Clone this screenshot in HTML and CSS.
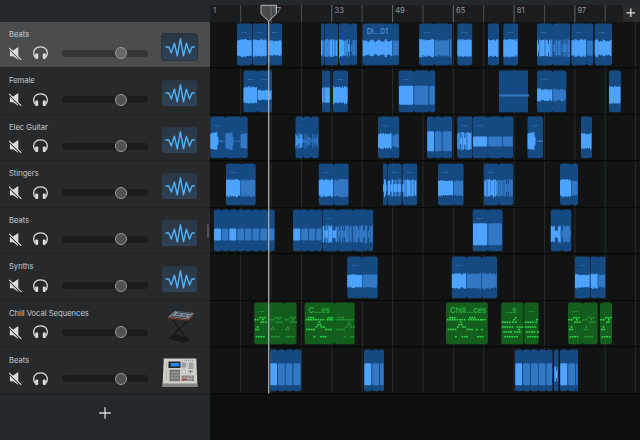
FILE: index.html
```html
<!DOCTYPE html>
<html lang="en">
<head>
<meta charset="utf-8">
<title>Tracks</title>
<link rel="stylesheet" href="styles.css">
</head>
<body>
<svg class="defs" width="0" height="0">
  <defs>
    <symbol id="mute" viewBox="0 0 13 13"><path fill="#dcdcdc" d="M.9 3.500h3.200L9.300 0v12.800L4.100 9.300H.900z"/><path d="M0 1.900 11.300 13.200" stroke="var(--row)" stroke-width="1.100"/><path d="M.200.900 12.300 12.800" stroke="#dcdcdc" stroke-width="1.100"/></symbol>
    <symbol id="phones" viewBox="0 0 15 14"><path d="M1.900 11.200C.5 8.500.4 5.200 2 3.200 4.500.2 10.500.2 13 3.200c1.600 2 1.500 5.300.1 8" fill="none" stroke="#dcdcdc" stroke-width="1.300"/><rect x="2.200" y="7.600" width="3" height="5.400" rx="1" fill="#dcdcdc"/><rect x="9.800" y="7.600" width="3" height="5.400" rx="1" fill="#dcdcdc"/></symbol>
    <symbol id="audio" viewBox="0 0 36 27"><path d="M3.500 13H6.800l2.500 6 3.100-9.800 2.900 12.600 3.100-17 3.100 17 2.900-12.600 3.100 9.800L30 13h2.800" fill="none" stroke="#52b2fa" stroke-width="1.400" stroke-linejoin="round"/></symbol>
    <symbol id="keys" viewBox="0 0 36 36">
      <path d="m5 30 9-4 15 6-8 3z" fill="#19191b"/>
      <path d="m11 12 14.500 20M27 12 10 28" stroke="#0b0c0c" stroke-width="1"/>
      <path d="m6 9 7-6 19 2-6 6.500z" fill="#78858c"/>
      <path d="m6 9 20 2.600 6-6.600v1.500L26.500 12.700 6 10.300z" fill="#7b3e25"/>
      <path d="m9 8 16 2M11 5.500l17 2.400M14 3.800l15 1.700" stroke="#2b353d" stroke-width=".8"/>
      <path d="m12 7 3-3M18 8l3-3M24 9l3-3" stroke="#b7c1c4" stroke-width=".8"/>
    </symbol>
    <symbol id="pads" viewBox="0 0 36 30">
      <path d="M1.800.5h32.500l1 25.500v3H.6v-3z" fill="#d1d0cb"/><path d="M.6 25.500h34.700V29H.6z" fill="#858585"/>
      <rect x="6.500" y="3.500" width="12" height="6.500" fill="#22272b"/><rect x="8.800" y="5" width="8.500" height="3.300" fill="#2387ef"/>
      <rect x="19.700" y="4.500" width="4.500" height="5" fill="#959ba5"/><rect x="26.500" y="4.500" width="5" height="6.500" fill="#a5a5a5"/>
      <rect x="7.500" y="11.700" width="10.500" height="11.500" fill="#6c6e70"/><path d="M7.500 14.500H18M7.500 17.300H18M7.500 20.200H18M10.200 11.700v11.500M12.800 11.700v11.500M15.400 11.700v11.500" stroke="#aaa" stroke-width=".6"/>
      <rect x="19.500" y="17.500" width="12.500" height="5.500" fill="#85817f"/><path d="M20 20.200h12M23 17.500V23M26 17.500V23M29 17.500V23" stroke="#ccc" stroke-width=".5"/><rect x="20.200" y="20.700" width="4" height="1.500" fill="#c43838"/>
      <circle cx="21.800" cy="13.500" r="1.700" fill="#eee" stroke="#777" stroke-width=".5"/><path d="M26 13.500h5M28.500 12v3.500" stroke="#777" stroke-width=".8"/>
      <path d="M4.400 4v6M4.400 12.500v9M20 2.400h11" stroke="#888" stroke-width=".9" stroke-dasharray="1 1"/>
    </symbol>
  </defs>
</svg>
<main class="app">
  <aside class="sidebar">
    <div class="sidebar-top"></div>
    <div class="tracks" id="tracks"></div>
    <div class="add-track"><svg width="12" height="12" viewBox="0 0 12 12"><path d="M6 .2v11.600M.2 6h11.600" stroke="#d8d9d9" stroke-width="1.300"/></svg></div>
    <span class="grip"></span>
  </aside>
  <section class="timeline">
    <div class="topband"></div>
    <div class="ruler"><svg id="ruler" width="430" height="17"></svg></div>
    <div class="lanes" id="lanes"></div>
    <svg class="playhead" width="18" height="394"><path d="M8.700 20.500V393.500" stroke="#adadad" stroke-width="1.300"/><path d="M1 5.300h15.500v8.500L8.700 21 1 13.800z" fill="#777" fill-opacity=".5" stroke="#b5b5b5" stroke-width="1"/></svg>
  </section>
</main>
<script src="app.js"></script>
</body>
</html>
```
FILE: styles.css
```css
* { box-sizing: border-box; }
body { margin: 0; background: #0e0f0f; font-family: Inter, "Liberation Sans", sans-serif; }
.defs { position: absolute; }
.app { display: grid; grid-template-columns: 210px 430px; width: 640px; height: 440px; overflow: hidden; }
.sidebar { position: relative; display: flex; flex-direction: column; background: #24282a; }
.sidebar-top { height: 21.5px; flex: none; }
.tracks { flex: none; }
.track { --row: #28292b; --groove: #1b1c1e; --knob: #515153; height: 46.520px; display: grid; grid-template-columns: 153px 36px; column-gap: 0; padding-left: 8.500px; background: var(--row); border-bottom: 1px solid #202223; }
.track.selected { --row: #4b4c4d; --groove: #353638; --knob: #67686a; }
.name { margin: 8.400px 0 0 .5px; height: 10px; color: #cacacb; font-size: 7.600px; line-height: 10px; white-space: nowrap; }
.controls { display: flex; align-items: center; height: 14px; margin-top: 6.400px; }
.controls svg { flex: none; }
.controls .mute { width: 13px; height: 13px; margin-right: 11.800px; }
.controls .phones { width: 15px; height: 14px; margin-right: 14.200px; }
.slider { display: flex; flex: none; align-items: center; width: 85.500px; height: 7px; padding-left: 52.500px; border-radius: 4px; background: var(--groove); }
.knob { flex: none; width: 12px; height: 12px; border: 1px solid #999a9b; border-radius: 50%; background: var(--knob); }
.thumb { width: 35px; height: 26px; margin-top: 12px; border-radius: 2px; background: linear-gradient(#2a3743, #2f4257); }
.selected .thumb { outline: 1px solid #28323d; }
.thumb svg { display: block; width: 36px; height: 27px; }
.thumb.keys, .thumb.pads { background: none; }
.thumb.keys { margin-top: 7px; }
.thumb.keys svg { width: 36px; height: 36px; }
.thumb.pads { margin-top: 11px; }
.thumb.pads svg { width: 36px; height: 30px; }
.add-track { flex: 1; display: flex; justify-content: center; padding-top: 12.700px; border-top: 1px solid #1c1e1f; }
.grip { position: absolute; left: 206.500px; top: 224px; width: 2.500px; height: 14px; border-radius: 1px; background: #505253; }
.timeline { position: relative; display: flex; flex-direction: column; background: #0d0e0e; }
.topband { height: 5px; background: #23282a; flex: none; }
.ruler { height: 17px; background: #1b1c1e; flex: none; }
.ruler svg, .lane svg { display: block; }
.lane { height: 46.530px; background: #121413; }
.playhead { position: absolute; left: 50px; top: 0; }
svg text { font-family: Inter, "Liberation Sans", sans-serif; }
```
FILE: app.js
```js
const names = ['Beats', 'Female', 'Elec Guitar', 'Stingers', 'Beats', 'Synths', 'Chill Vocal Sequences', 'Beats'];
document.getElementById('tracks').innerHTML = names.map((n, i) => {
  const icon = i === 6 ? 'keys' : i === 7 ? 'pads' : 'audio';
  return `<div class="track${i ? '' : ' selected'}"><div><div class="name">${n}</div><div class="controls">
  <svg class="mute"><use href="#mute"/></svg><svg class="phones"><use href="#phones"/></svg>
  <div class="slider"><span class="knob"></span></div></div></div>
  <div class="thumb ${icon}"><svg><use href="#${icon}"/></svg></div></div>`;
}).join('');

const X0 = 210, BEAT = 30.38;
let r = '';
for (let i = 0; i < 15; i++) {
  const x = .3 + i * BEAT;
  if (i) r += `<path d="M${x} 0V17" stroke="${i % 2 ? '#4c4e4f' : '#666868'}" stroke-width="1"/>`;
  if (i % 2 === 0 && i < 14) r += `<text x="${x + 2.700}" y="7.600" font-size="7.500" fill="#96989a">${1 + i * 8}</text>`;
}
r += '<rect x="413" width="17" height="17" fill="#292b2d"/><path d="M420.800 3.500v8.600M416.500 7.800h8.600" stroke="#e0e0e0" stroke-width="1.300"/>';
document.getElementById('ruler').innerHTML = r;

// Segment: [start, end, bright, wave kind, half height, label]
const E = '…';
const lanes = [
  [[237,252.2,1,'n',9,E],[252.7,267.2,1,'n',9,E],[267.8,282,1,'n',8,E],
   [321,324,1,'s',9],[324.5,338,1,'s',9],[339,350.8,1,'s',9],[350.8,357,0,'s',9],
   [362.7,392.5,1,'w',9,'Di…01'],[392.5,399,0,'n',8],
   [419.2,434.5,1,'n',9,E],[434.5,450,0,'n',9],[450,452,0,'n',9],[457.3,472.2,1,'n',9,E],[488,499,1,'n',9],[503.3,518,1,'n',9,E],
   [537,552.5,1,'s',9,E],[552.5,570.3,0,'s',9],[571.5,586.7,1,'n',9,E],[586.7,593.3,0,'n',8],[594.7,612,1,'w',9,E]],
  [[243.5,257.6,1,'n',9,E],[257.6,272,1,'w',6,E],[322,324.4,1,'n',8],[324.4,330.3,1,'n',8],[333,348,1,'n',9,E],
   [398.7,414,1,'b',9.500,E],[414,429,0,'b',9.500],[429,435.2,0,'b',9.500],[499,528,0,'l',1],
   [537,552.5,1,'w',7,E],[552.5,566.3,0,'w',7],[609,621,1,'n',9]],
  [[210.3,225.5,1,'u',10,E],[225.5,240.500,0,'u',10],[240.500,247.7,0,'u',9],[295.5,303.5,1,'q',8,E],[303.5,311.3,0,'q',8],[311.3,318.7,0,'q',8],
   [378,392.3,1,'n',8,E],[392.3,399.2,0,'n',7],[427,434.700,1,'b',10],[434.700,442.300,0,'b',10],[442.300,452.200,0,'b',10],
   [457.3,472.3,1,'s',9,E],[472.7,488,1,'b',5,E],[488,502.500,0,'b',5],[502.500,513.2,0,'b',5],[527.5,543,1,'u',10,E],[581,592,1,'n',8]],
  [[226,240.500,1,'n',9,E],[240.500,255.700,0,'n',9],[318.800,333.700,1,'n',9,E],[333.700,348.700,0,'n',9],[383,387.2,1,'s',9],[387.6,401.700,1,'s',9,E],[402.400,417.2,1,'s',9,E],
   [438,453.600,1,'n',8,E],[453.600,463.6,0,'n',8],[484,499,1,'s',9,E],[499,513.2,0,'s',9],[560,571.5,1,'n',9],[571.500,578,0,'n',8]],
  [[213.8,221.500,1,'b',6],[221.500,229,0,'b',6],[229,237,1,'b',6],[237,244.500,0,'b',6],[244.500,252.300,0,'b',6],[252.300,260,0,'b',6],[260,267.500,0,'b',6],[267.500,274.800,0,'b',6],
   [293,301,1,'b',6],[301,308.500,0,'b',6],[308.500,316,0,'b',6],[316,322,0,'b',6],[322.600,338,1,'s',9,E],[338,353,0,'s',9],[353,368,0,'s',9],[368,373.2,0,'s',9],
   [472.700,488,1,'b',11,E],[488,502.500,0,'b',11],[550.800,562,1,'s',9],[562,571.300,0,'s',9]],
  [[347.2,362.500,1,'n',7,E],[362.500,377.700,0,'n',7],[451.800,466.700,1,'n',8,E],[466.700,482,0,'n',8],[482,497.2,0,'n',8],
   [575,590.200,1,'n',7,E],[590.600,598.300,1,'n',8],[598.300,605.500,0,'n',7]],
  [[254.2,269.5,1,'A',0,E],[269.5,284.300,0,'A',0],[284.300,296.500,0,'A',0],[304.600,334.500,1,'B',0,'C…es'],[334.500,354.600,0,'B',0],
   [446,487.800,1,'B',0,'Chill…ces'],[501.200,523.500,1,'C',0,'…s'],[524.200,538.600,1,'C',0,E],[568,582.600,1,'A',0,E],[582.600,597.700,0,'A',0],[600,612,1,'A',0]],
  [[270,277.700,1,'b',11],[277.700,285.400,0,'b',11],[285.400,293,0,'b',11],[293,301,0,'b',11],[364,372,1,'b',11],[372,379.600,0,'b',11],[379.600,384,0,'b',11],
   [515,522.800,1,'b',11],[522.800,530.600,0,'b',11],[530.600,538.500,0,'b',11],[538.500,546.200,0,'b',11],[546.200,552.600,0,'b',11],[554,558.500,1,'s',9],[560,568,1,'b',11],[568,575.600,0,'b',11],[575.600,578,0,'b',11]]
];

// Notes: [start, y, end] runs of short dashes
const notes = {
  A: [[.3,19,4],[5,17,8],[10,17,11],[6,21.500,7],[8,19,9],[8.300,21.500,9.500],[11,21.500,12],[1,28.800,3.600],[2.600,26.300,4],[1.500,36,9]],
  B: [[1,19,16.500],[18,19,20],[22,19,34],[35.500,19,40],[3,17,9],[23,17,30],[14,21.500,15.500],[12.500,24,14],[15,24,16.500],[11,26.300,13],[16,26.300,20],
      [1.500,28.800,10],[20.500,28.800,27],[30,28.800,32],[35,28.800,37],[9,36,10.500],[15.500,36,21],[31,36,36]],
  C: [[.7,21.500,8],[11,21.500,12],[14,21.500,15.500],[12,19,14],[13.500,17,14.500],[.7,26.300,11],[15.500,26.300,22],[17,28.800,19],[2,31.200,10],[13,31.200,20],[3,36,16]]
};

let seed = 7;
const rnd = () => (seed = (seed * 16807) % 2147483647) / 2147483647;

function wave(a, b, kind, h) {
  if (kind === 'l') return `M${a} 25.500H${b + 1}v2H${a}z`;
  const c = kind === 'b' && h < 8 ? 26.600 : 26.300;
  if (kind === 'b') return `M${a + .3} ${c - h + .7}l1-.7H${b - 1.500}l1 .7V${c + h - .7}l-1 .7H${a + 1.300}l-1-.7z`;
  let d = '';
  for (let x = a, i = 0; x < b - .5; x++, i++) {
    let v = h * (.84 + .2 * rnd()), w = 1.050;
    const odd = rnd();
    if (kind === 'w') v = h * (.74 + .1 * Math.sin(i * .9) + .2 * rnd());
    if (kind === 's') { if (odd < .16) v *= .45; w = odd > .65 ? .7 : 1.050; }
    if (kind === 'q') { v *= odd < .35 ? .3 : odd < .6 ? .6 : .95; w = .850; }
    if (kind === 'u') v = i < 8 ? h * [.75, .82, .85, .85, .85, .9, .9, .45][i] : .5;
    w = Math.min(w, b - x - .500);
    if (w > 0) d += `M${x.toFixed(2)} ${(c - v).toFixed(2)}h${w.toFixed(2)}v${(2 * v - rnd()).toFixed(2)}h-${w.toFixed(2)}z`;
  }
  return d;
}

document.getElementById('lanes').innerHTML = lanes.map((segs, row) => {
  let s = '', end = 0;
  for (let i = 1; i < 15; i++) s += `<path d="M${.3 + i * BEAT} 0V46.500" stroke="#2b2d2d" stroke-width="1"/>`;
  s += '<path d="M0 45.600H430" stroke="#060707" stroke-width="1.200"/>';
  for (const [l, e, bright, kind, h, label] of segs) {
    const a = l - X0, b = e - X0, green = row === 6, body = green ? '#135d1d' : '#154a82';
    s += `<rect x="${a}" y="1.500" width="${b - a}" height="41.800" rx="${kind === 'l' ? 0 : Math.min(2.200, (b - a) / 3)}" fill="${body}"/>`;
    // a loop repeat joins the segment before it, leaving only a notch at each edge
    if (l === end) s += `<rect x="${a - 1.200}" y="3" width="2.400" height="${green ? 38.800 : 12}" fill="${body}"/>` + (green ? '' : `<rect x="${a - .500}" y="15" width="1.700" height="26.800" fill="${body}"/>`);
    end = e;
    if (green) {
      for (const [n, y, m] of notes[kind])
        for (let x = n; x < m && x < b - a - 1; x += 2.400)
          s += `<rect x="${a + x}" y="${y - 1.100}" width="1.700" height="1.600" fill="${bright ? '#2bdc4b' : '#229b37'}"/>`;
    } else {
      s += `<path d="${wave(a, b, kind, h)}" fill="${bright ? '#4da3ff' : '#3278c5'}"/>`;
    }
    if (label) {
      const dots = label === E;
      s += `<text x="${a + 4}" y="${dots ? 10.900 : 11.700}" font-size="${dots ? 6.500 : 7.500}" font-weight="${green || dots ? 600 : 400}" fill="${green ? '#29b342' : dots ? '#4688cf' : '#5aa5f2'}">${label}</text>`;
    }
  }
  return `<div class="lane"><svg width="430" height="46.500">${s}</svg></div>`;
}).join('');
```
